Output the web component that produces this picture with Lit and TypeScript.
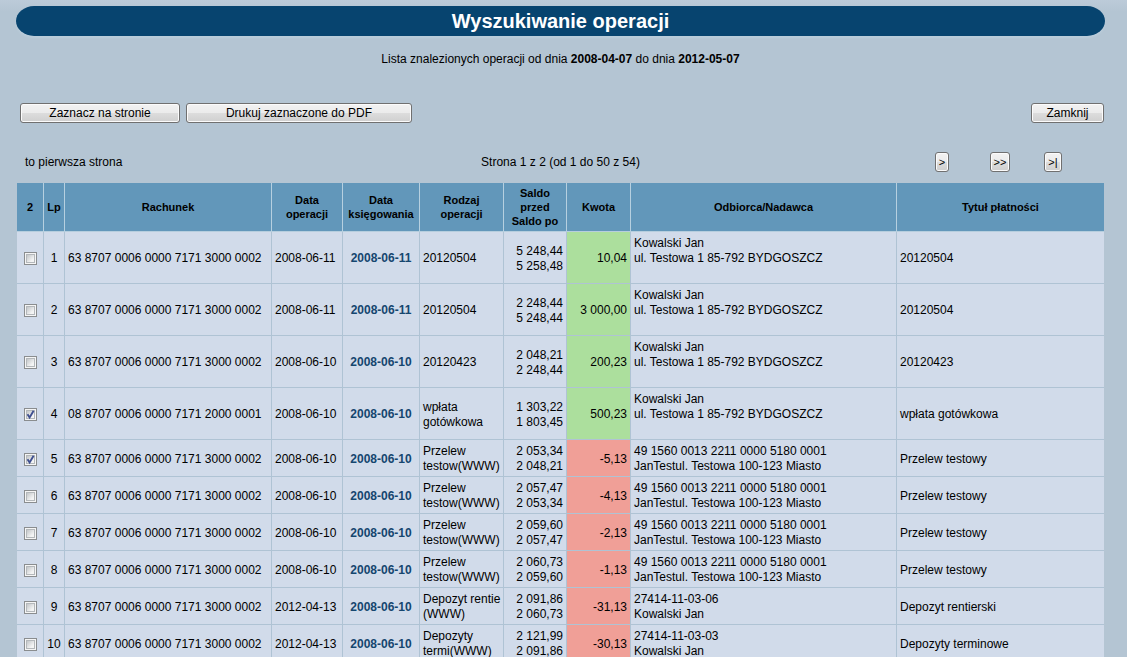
import { LitElement, html, css } from "lit";
import { customElement, property, state } from "lit/decorators.js";
import { classMap } from "lit/directives/class-map.js";

interface Operation {
  account: string;
  date: string;
  booked: string;
  kind: string[];
  before: string;
  after: string;
  amount: string;
  party: string[];
  title: string;
  tall: boolean;
  checked: boolean;
}

const ACCOUNT = "63 8707 0006 0000 7171 3000 0002";
const KOWALSKI = ["Kowalski Jan", "ul. Testowa 1 85-792 BYDGOSZCZ"];
const MIASTO = ["49 1560 0013 2211 0000 5180 0001", "JanTestul. Testowa 100-123 Miasto"];
const TRANSFER = ["Przelew", "testow(WWW)"];

const op = (
  account: string, date: string, booked: string, kind: string[], before: string, after: string,
  amount: string, party: string[], title: string, tall = false, checked = false
): Operation => ({ account, date, booked, kind, before, after, amount, party, title, tall, checked });

const OPERATIONS: Operation[] = [
  op(ACCOUNT, "2008-06-11", "2008-06-11", ["20120504"], "5 248,44", "5 258,48", "10,04", KOWALSKI, "20120504", true),
  op(ACCOUNT, "2008-06-11", "2008-06-11", ["20120504"], "2 248,44", "5 248,44", "3 000,00", KOWALSKI, "20120504", true),
  op(ACCOUNT, "2008-06-10", "2008-06-10", ["20120423"], "2 048,21", "2 248,44", "200,23", KOWALSKI, "20120423", true),
  op("08 8707 0006 0000 7171 2000 0001", "2008-06-10", "2008-06-10", ["wpłata", "gotówkowa"], "1 303,22", "1 803,45", "500,23", KOWALSKI, "wpłata gotówkowa", true, true),
  op(ACCOUNT, "2008-06-10", "2008-06-10", TRANSFER, "2 053,34", "2 048,21", "-5,13", MIASTO, "Przelew testowy", false, true),
  op(ACCOUNT, "2008-06-10", "2008-06-10", TRANSFER, "2 057,47", "2 053,34", "-4,13", MIASTO, "Przelew testowy"),
  op(ACCOUNT, "2008-06-10", "2008-06-10", TRANSFER, "2 059,60", "2 057,47", "-2,13", MIASTO, "Przelew testowy"),
  op(ACCOUNT, "2008-06-10", "2008-06-10", TRANSFER, "2 060,73", "2 059,60", "-1,13", MIASTO, "Przelew testowy"),
  op(ACCOUNT, "2012-04-13", "2008-06-10", ["Depozyt rentie", "(WWW)"], "2 091,86", "2 060,73", "-31,13", ["27414-11-03-06", "Kowalski Jan"], "Depozyt rentierski"),
  op(ACCOUNT, "2012-04-13", "2008-06-10", ["Depozyty", "termi(WWW)"], "2 121,99", "2 091,86", "-30,13", ["27414-11-03-03", "Kowalski Jan"], "Depozyty terminowe"),
];

@customElement("operations-table")
export class OperationsTable extends LitElement {
  @property({ attribute: false }) rows: Operation[] = [];

  static styles = css`
    :host { display: block; }
    table {
      width: 100%;
      table-layout: fixed;
      border-collapse: separate;
      border-spacing: 0;
      background: #d1dbea;
      font-size: 12px;
      line-height: 15px;
    }
    .w-check { width: 27px; }
    .w-no { width: 21px; }
    .w-account { width: 207px; }
    .w-date { width: 71px; }
    .w-booked { width: 77px; }
    .w-kind { width: 84px; }
    .w-balance { width: 63px; }
    .w-amount { width: 64px; }
    .w-party { width: 266px; }
    th, td {
      box-sizing: border-box;
      padding: 4px 3px 2px;
      border-right: 1px solid #afc3d4;
      border-bottom: 1px solid #afc3d4;
      white-space: nowrap;
      text-align: left;
      vertical-align: middle;
    }
    th:last-child, td:last-child { border-right: 0; }
    th {
      padding: 3px 2px;
      background: #6297ba;
      border-right-color: #b6d0e0;
      border-bottom-color: #b6cede;
      font-size: 11px;
      line-height: 14px;
      font-weight: bold;
      text-align: center;
    }
    .tall td { height: 52px; }
    td.center { text-align: center; }
    td.right { text-align: right; }
    td.party { vertical-align: top; }
    td.plus { background: #acdf9d; }
    td.minus { background: #f09f97; }
    .line { display: block; }
    a { color: #15466f; font-weight: bold; text-decoration: none; }
    .tick {
      appearance: none;
      display: block;
      box-sizing: border-box;
      width: 13px;
      height: 13px;
      margin: 0 auto;
      border: 1px solid #8a8d8f;
      background:
        linear-gradient(135deg, #c3c6c9, #f3f4f4 75%) center / 7px 7px no-repeat,
        linear-gradient(#b4b8bb, #b4b8bb) center / 9px 9px no-repeat,
        #f5f5f5;
    }
    .tick:checked {
      background:
        url("data:image/svg+xml,%3Csvg xmlns='http://www.w3.org/2000/svg' viewBox='0 0 11 11'%3E%3Cpath d='M2.5 5.2 L4.6 8.4 L8.6 1.8' fill='none' stroke='%233f4f8f' stroke-width='1.9'/%3E%3C/svg%3E") center / 11px 11px no-repeat,
        linear-gradient(135deg, #c3c6c9, #f3f4f4 75%) center / 7px 7px no-repeat,
        linear-gradient(#b4b8bb, #b4b8bb) center / 9px 9px no-repeat,
        #f5f5f5;
    }
  `;

  private lines(parts: string[]) {
    return parts.map((p) => html`<span class="line">${p}</span>`);
  }

  private toggle(row: Operation) {
    row.checked = !row.checked;
    this.requestUpdate();
  }

  render() {
    return html`
      <table>
        <colgroup>
          <col class="w-check" /><col class="w-no" /><col class="w-account" /><col class="w-date" />
          <col class="w-booked" /><col class="w-kind" /><col class="w-balance" /><col class="w-amount" />
          <col class="w-party" /><col />
        </colgroup>
        <thead>
          <tr>
            <th scope="col">${this.rows.filter((r) => r.checked).length}</th>
            <th scope="col">Lp</th>
            <th scope="col">Rachunek</th>
            <th scope="col">Data<br />operacji</th>
            <th scope="col">Data<br />księgowania</th>
            <th scope="col">Rodzaj<br />operacji</th>
            <th scope="col">Saldo<br />przed<br />Saldo po</th>
            <th scope="col">Kwota</th>
            <th scope="col">Odbiorca/Nadawca</th>
            <th scope="col">Tytuł płatności</th>
          </tr>
        </thead>
        <tbody>
          ${this.rows.map((r, i) => {
            const minus = r.amount.startsWith("-");
            return html`
              <tr class=${classMap({ tall: r.tall })}>
                <td><input class="tick" type="checkbox" aria-labelledby="no-${i}" .checked=${r.checked} @change=${() => this.toggle(r)} /></td>
                <td class="center" id="no-${i}">${i + 1}</td>
                <td>${r.account}</td>
                <td>${r.date}</td>
                <td class="center"><a href="#">${r.booked}</a></td>
                <td>${this.lines(r.kind)}</td>
                <td class="right">${this.lines([r.before, r.after])}</td>
                <td class=${classMap({ right: true, minus, plus: !minus })}>${r.amount}</td>
                <td class="party">${this.lines(r.party)}</td>
                <td>${r.title}</td>
              </tr>`;
          })}
        </tbody>
      </table>
    `;
  }
}

@customElement("app-root")
export class AppRoot extends LitElement {
  @state() private rows: Operation[] = OPERATIONS;

  static styles = css`
    :host {
      display: block;
      box-sizing: border-box;
      height: 100vh;
      overflow: hidden;
      padding: 6px 23px 0 17px;
      border-bottom: 1px solid #fff;
      background: linear-gradient(#bccbd9, #b4c5d3 12px);
      color: #000;
      font: 12px/15px "Liberation Sans", Arial, sans-serif;
    }
    .title {
      margin: 0 -1px;
      border-radius: 18px / 15px;
      background: #07446f;
      box-shadow: 0 2px 2px #bacddb;
      color: #fff;
      font-size: 20px;
      line-height: 30px;
      font-weight: bold;
      text-align: center;
    }
    .summary { margin: 16px 0 36px; text-align: center; }
    .actions { display: flex; gap: 6px; padding-left: 3px; }
    button {
      box-sizing: border-box;
      height: 20px;
      padding: 0;
      border: 1px solid #707070;
      border-radius: 3px;
      background: linear-gradient(#f2f2f2, #ebebeb 50%, #dddddd 50%, #cfcfcf);
      box-shadow: inset 0 0 0 1px #fbfbfb;
      color: #000;
      font: inherit;
      line-height: 16px;
    }
    .select-page { width: 160px; }
    .print { width: 226px; }
    .close { width: 73px; margin-left: auto; }
    .pager {
      display: grid;
      grid-template-columns: 1fr auto 1fr;
      align-items: center;
      margin: 29px 0 11px;
    }
    .where { padding-left: 8px; }
    .steps {
      display: grid;
      grid-template-columns: 58px 58px 48px;
      justify-content: end;
      justify-items: center;
      padding-right: 27px;
    }
    .steps button { padding: 0 3px; font-size: 11px; }
  `;

  private selectPage() {
    this.rows = this.rows.map((r) => ({ ...r, checked: true }));
  }

  render() {
    return html`
      <h1 class="title">Wyszukiwanie operacji</h1>
      <p class="summary">Lista znalezionych operacji od dnia <b>2008-04-07</b> do dnia <b>2012-05-07</b></p>
      <div class="actions">
        <button class="select-page" type="button" @click=${this.selectPage}>Zaznacz na stronie</button>
        <button class="print" type="button">Drukuj zaznaczone do PDF</button>
        <button class="close" type="button">Zamknij</button>
      </div>
      <nav class="pager">
        <span class="where">to pierwsza strona</span>
        <span>Strona 1 z 2 (od 1 do 50 z 54)</span>
        <div class="steps">
          <button type="button">&gt;</button>
          <button type="button">&gt;&gt;</button>
          <button type="button">&gt;|</button>
        </div>
      </nav>
      <operations-table .rows=${this.rows}></operations-table>
    `;
  }
}
